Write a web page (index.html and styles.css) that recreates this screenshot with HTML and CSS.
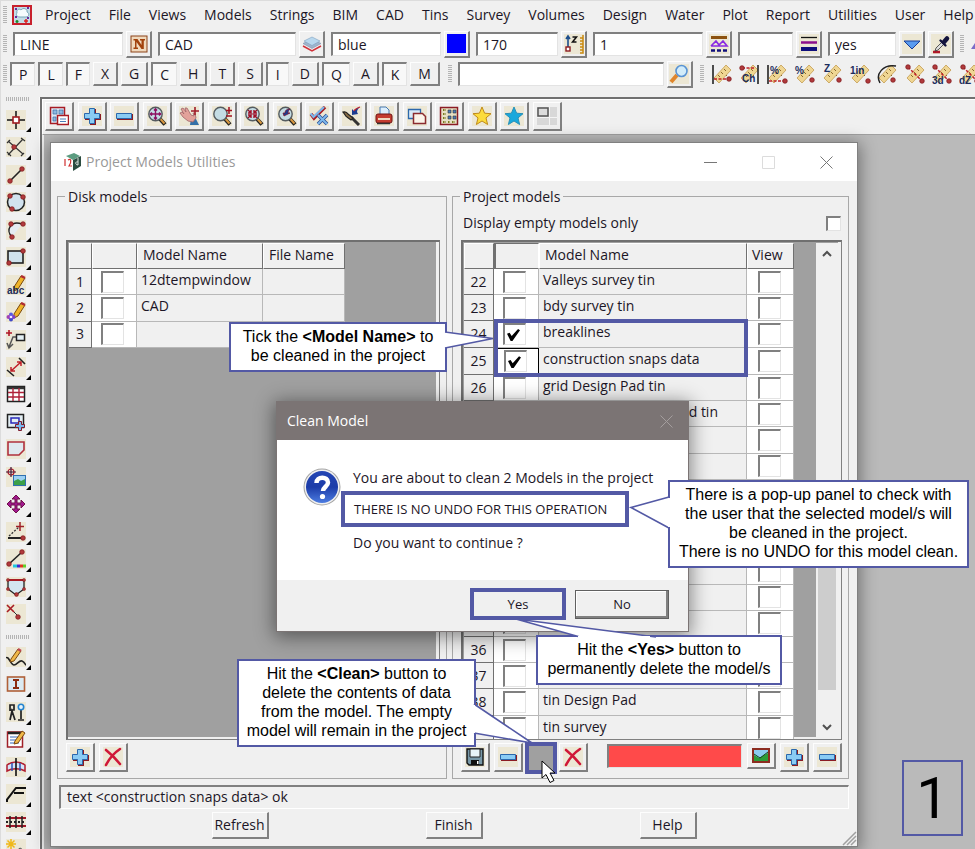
FILE: index.html
```
<!DOCTYPE html>
<html lang="en">
<head>
<meta charset="utf-8">
<title>Project Models Utilities</title>
<link rel="stylesheet" href="styles.css">
</head>
<body>

<svg class="defs" aria-hidden="true">
  <symbol id="bg" viewBox="0 0 20 20"><rect width="20" height="20" fill="#ece7d4"/></symbol>
  <symbol id="i-app" viewBox="0 0 20 20"><rect x="1" y="1" width="18" height="18" fill="#c3dce6" stroke="#c8202c" stroke-width="2"/><path d="M5 8c-1-3 2-5 4-3 2-3 7-1 6 2 3 1 2 5-1 5H8c-4 0-4-3-3-4z" fill="#f6fbfd" stroke="#7aa6b8"/><path d="M3 4h2M15 3h2M3 12h2M15 13h2" stroke="#6a2a9c" stroke-width="2"/><path d="M5 15v3M3.500 16.500h3" stroke="#1a8a2a" stroke-width="1.500"/><path d="M14 14v4M12 16h4" stroke="#e02020" stroke-width="1.500"/></symbol>
  <symbol id="i-n" viewBox="0 0 20 20"><rect x="2" y="2" width="16" height="16" fill="#f0d9bd" stroke="#8c4218"/><path d="M4.500 5h4l4 6V6.500H11V5h5v1.500h-1.200V15H12.500L7.500 8v5.500H9V15H4.500v-1.500H6v-7H4.500z" fill="#a2420c"/></symbol>
  <symbol id="i-layers" viewBox="0 0 20 20"><path d="M1 12l9 5 9-5" fill="none" stroke="#d03038" stroke-width="1.500"/><path d="M1 9.500l9-4.500 9 4.500-9 5z" fill="#9eb4cc" stroke="#7c92b0" stroke-width=".6"/><path d="M2 7l8-4 8 4-8 4.500z" fill="#b9d8ee" stroke="#7da0c0" stroke-width=".6"/></symbol>
  <symbol id="i-z" viewBox="0 0 20 20"><use href="#bg"/><path d="M4 2v12M2 5l2-3 2 3" fill="none" stroke="#1c4e8c" stroke-width="1.600"/><rect x="2" y="13" width="4" height="4" fill="#fff" stroke="#8c1c20" stroke-width="1.400"/><path d="M8.500 3h4l-4 5h4" fill="none" stroke="#111" stroke-width="1.500"/><path d="M19 1v18h-3M16 4h3M16 7h3M16 10h3M16 13h3M16 16h3" fill="none" stroke="#c98a10" stroke-width="1.500"/></symbol>
  <symbol id="i-tin" viewBox="0 0 20 20"><use href="#bg"/><path d="M2 3.500h16" stroke="#8c5210" stroke-width="3"/><path d="M2 12l5-5 3 4 4-4 4 5H2" fill="none" stroke="#8a2be2" stroke-width="1.700"/><path d="M2 16.500h16" stroke="#10107c" stroke-width="2.500" stroke-dasharray="4 2"/></symbol>
  <symbol id="i-weight" viewBox="0 0 20 20"><use href="#bg"/><path d="M2 3.500h16" stroke="#111" stroke-width="1.300"/><path d="M2 8.500h16" stroke="#8c108c" stroke-width="2.500"/><path d="M2 15h16" stroke="#10107c" stroke-width="4"/></symbol>
  <symbol id="i-down" viewBox="0 0 20 20"><use href="#bg"/><path d="M2 7h16l-8 8z" fill="#5a9cf0" stroke="#1a3e98"/></symbol>
  <symbol id="i-drop" viewBox="0 0 20 20"><use href="#bg"/><path d="M2 18h7" stroke="#b01828" stroke-width="2.500"/><path d="M4 17l1-3 6-6 2 2-6 6z" fill="#ddd" stroke="#333" stroke-width=".8"/><path d="M9.500 6.500l5 5" stroke="#14143c" stroke-width="2.400" stroke-linecap="round"/><path d="M13 8l3-3.500" stroke="#14143c" stroke-width="4.500" stroke-linecap="round"/></symbol>
  <symbol id="i-find" viewBox="0 0 20 20"><use href="#bg"/><path d="M2 18l6-7" stroke="#e0862c" stroke-width="4"/><circle cx="12.500" cy="7" r="5.500" fill="#d2ecfa" stroke="#5a94d4" stroke-width="1.600"/></symbol>
  <symbol id="ruler" viewBox="0 0 22 22"><path d="M3 15L15 2l5 5L8 20z" fill="#efd693" stroke="#c49c50" stroke-width=".8"/><path d="M7 12l2 2M10 9l2 2M13 6l2 2M15 12l1 1" stroke="#8c6a30"/></symbol>
  <symbol id="rdot" viewBox="0 0 6 6"><circle cx="3" cy="3" r="2.300" fill="#b03a3c" stroke="#7c1418" stroke-width=".7"/></symbol>
  <symbol id="m1" viewBox="0 0 22 22"><use href="#ruler"/><path d="M2 2v19" stroke="#222" stroke-width="1.600"/><path d="M3 16h14" stroke="#c02028" stroke-width="1.500" stroke-dasharray="3 1.500"/><use href="#rdot" x="15" y="13" width="6" height="6"/></symbol>
  <symbol id="m2" viewBox="0 0 22 22"><use href="#ruler"/><path d="M4 5h13" stroke="#c02028" stroke-width="1.500" stroke-dasharray="3 1.500"/><use href="#rdot" x="1" y="2" width="6" height="6"/><path d="M20 2v19" stroke="#222" stroke-width="1.600"/><text x="4" y="19" class="tt">Ch</text></symbol>
  <symbol id="m3" viewBox="0 0 22 22"><use href="#ruler"/><path d="M2 2v19" stroke="#222" stroke-width="1.600"/><path d="M3 18h14" stroke="#c02028" stroke-width="1.500" stroke-dasharray="3 1.500"/><use href="#rdot" x="16" y="15" width="6" height="6"/><text x="4" y="11" class="tt">%</text></symbol>
  <symbol id="m4" viewBox="0 0 22 22"><use href="#ruler"/><use href="#rdot" x="15" y="14" width="6" height="6"/><text x="1" y="11" class="tt">%</text></symbol>
  <symbol id="m5" viewBox="0 0 22 22"><use href="#ruler"/><use href="#rdot" x="15" y="14" width="6" height="6"/><text x="3" y="9" class="tt">Z</text></symbol>
  <symbol id="m6" viewBox="0 0 22 22"><use href="#ruler"/><use href="#rdot" x="16" y="15" width="6" height="6"/><text x="1" y="11" class="tt">1in</text></symbol>
  <symbol id="m7" viewBox="0 0 22 22"><use href="#ruler"/><path d="M4 20C-1 11 7 1 20 3" fill="none" stroke="#222" stroke-width="1.500"/><use href="#rdot" x="14" y="14" width="6" height="6"/></symbol>
  <symbol id="m8" viewBox="0 0 22 22"><use href="#ruler"/><path d="M4 4l14 14" stroke="#c02028" stroke-width="1.500" stroke-dasharray="3 1.500"/><use href="#rdot" x="1" y="1" width="6" height="6"/><use href="#rdot" x="15" y="15" width="6" height="6"/></symbol>
  <symbol id="m9" viewBox="0 0 22 22"><use href="#m8"/><text x="1" y="21" class="tt">3d</text></symbol>
  <symbol id="m10" viewBox="0 0 22 22"><use href="#m8"/><text x="0" y="21" class="tt">dZ</text></symbol>

  <symbol id="t-views" viewBox="0 0 20 20"><rect x="1.500" y="1.500" width="14" height="16" fill="#dbe9f6" stroke="#a81c24" stroke-width="1.500"/><path d="M4 4h4v4H4zM10 4h4v4h-4zM4 11h3v4H4z" fill="#8cb8e0" stroke="#3c6ca0" stroke-width=".7"/><rect x="8.500" y="9.500" width="11" height="9" fill="#fff" stroke="#a81c24" stroke-width="1.500"/><path d="M11 13h6M11 15.500h6" stroke="#4a7cb8"/></symbol>
  <symbol id="t-plus" viewBox="0 0 20 20"><use href="#bg"/><path d="M8 3h6v5h5v6h-5v5H8v-5H3V8h5z" fill="#8c1c24"/><path d="M7.500 2.500h5v5h5v5h-5v5h-5v-5h-5v-5h5z" fill="#8accf4" stroke="#2c68ac"/></symbol>
  <symbol id="t-minus" viewBox="0 0 20 20"><use href="#bg"/><path d="M3 8h16v6H3z" fill="#8c1c24"/><path d="M2.500 7.500h15v5h-15z" fill="#8accf4" stroke="#2c68ac"/></symbol>
  <symbol id="mag" viewBox="0 0 20 20"><use href="#bg"/><path d="M12.500 12.500l5.500 6" stroke="#222" stroke-width="4"/><path d="M13.500 13l4 4.500" stroke="#d89840" stroke-width="2"/><circle cx="8.500" cy="8" r="6.700" fill="#c4dce4" stroke="#555c60" stroke-width="1.400"/></symbol>
  <symbol id="t-zoomall" viewBox="0 0 20 20"><use href="#mag"/><path d="M8.500 3v10M3.500 8h10M7 4.500l1.500-1.700L10 4.500M7 11.500l1.500 1.700 1.500-1.700M5 6.500L3.300 8 5 9.500M12 6.500L13.700 8 12 9.500" fill="none" stroke="#8c1060" stroke-width="1.400"/></symbol>
  <symbol id="t-pan" viewBox="0 0 20 20"><use href="#bg"/><path d="M12 12l5 1 3 6h-9z" fill="#3470a8"/><path d="M1 7l2-1 2 2-3-5 2-1 3 4-1-4 2 0 4 7 3 1-1-3 2 0 1 5-3 4-5-1-5-4z" fill="#e2a29a" stroke="#a06468" stroke-width=".8"/><path d="M16 1v8M12 5h8" stroke="#a01c28" stroke-width="1.600"/></symbol>
  <symbol id="t-zoompm" viewBox="0 0 20 20"><use href="#mag"/><path d="M17 1v7M14 4.500h6M14 10h6" stroke="#a01020" stroke-width="1.500"/></symbol>
  <symbol id="t-zoomin" viewBox="0 0 20 20"><use href="#mag"/><path d="M4 4l3 3H4M7 7V4M13 4l-3 3h3M10 7V4M4 12l3-3H4M7 9v3M13 12l-3-3h3M10 9v3" fill="none" stroke="#a01028" stroke-width="1.400"/></symbol>
  <symbol id="t-zoomprev" viewBox="0 0 20 20"><use href="#mag"/><path d="M7 10l-1-3h2c0-3 2-4 5-4-1 1-2 2-2 4h2z" fill="#1c3c90" stroke="#801028" stroke-width=".7"/></symbol>
  <symbol id="t-sel" viewBox="0 0 20 20"><use href="#bg"/><path d="M2 8l3 4L16 1" fill="none" stroke="#a81c24" stroke-width="3.500"/><path d="M1.500 7.500l3 3.500L15 1" fill="none" stroke="#7cb8ec" stroke-width="2.200"/><path d="M9 9l9 9M18 9l-9 9" stroke="#2c4c94" stroke-width="3.500"/><path d="M9 9l9 9M18 9l-9 9" stroke="#7cb8ec" stroke-width="2"/></symbol>
  <symbol id="t-brush" viewBox="0 0 20 20"><use href="#bg"/><path d="M9 11l8 8" stroke="#333" stroke-width="3"/><path d="M1 6c3-1 4 1 5 2l5 4-2 2-4-3C3 10 3 8 1 6z" fill="#8c7048" stroke="#222" stroke-width="1.200"/><path d="M10 9l0-6 2 2c1-2 3-3 6-4-2 2-3 3-3 5l1 2z" fill="#1c3c90"/><path d="M12 5c1-2 3-3 6-4" fill="none" stroke="#c02030" stroke-width="1.300"/></symbol>
  <symbol id="t-print" viewBox="0 0 20 20"><use href="#bg"/><path d="M6 8V1h6l3 3v4" fill="#dceefc" stroke="#4878b0"/><rect x="2" y="8" width="16" height="9" rx="2" fill="#c43c30" stroke="#701414"/><path d="M4 13h12" stroke="#f0d8c0" stroke-width="2"/><path d="M3 17.500h13" stroke="#333" stroke-width="1.500"/></symbol>
  <symbol id="t-copy" viewBox="0 0 20 20"><use href="#bg"/><path d="M1.500 3.500h12v9h-12z" fill="#d8eaf8" stroke="#2c68ac" stroke-width="1.300"/><path d="M6.500 7.500h9l3 3v7h-12z" fill="#fbf4ea" stroke="#8c2c30" stroke-width="1.500"/></symbol>
  <symbol id="t-grid" viewBox="0 0 20 20"><rect x="1.500" y="1.500" width="17" height="17" fill="#e6e0c4" stroke="#8c1c24" stroke-width="1.500"/><path d="M4 4h3M4 8h3M4 12h3M4 16h3M9 16h2M13 16h3" stroke="#7c7c20" stroke-width="2" stroke-dasharray="1.500 1"/><path d="M9 4h3v3H9zM14 4h3v3h-3zM9 10h3v3H9zM14 10h3v3h-3z" fill="#4c7cb8" stroke="#333" stroke-width=".6"/></symbol>
  <symbol id="t-stary" viewBox="0 0 20 20"><use href="#bg"/><path d="M10 1l2.600 6.200 6.400.5-5 4.200 1.600 6.600L10 15l-5.600 3.500L6 11.900 1 7.700l6.400-.5z" fill="#fcdc3c" stroke="#c08a18"/></symbol>
  <symbol id="t-starb" viewBox="0 0 20 20"><use href="#bg"/><path d="M10 1l2.600 6.200 6.400.5-5 4.200 1.600 6.600L10 15l-5.600 3.500L6 11.900 1 7.700l6.400-.5z" fill="#18a8dc" stroke="#2890b8"/></symbol>
  <symbol id="t-layout" viewBox="0 0 20 20"><rect y="1" width="20" height="18" fill="#d8d8d8"/><path d="M0 11.500h20M12.500 1v18" stroke="#f4f4f4"/><rect x="1" y="2" width="10" height="8" fill="#dcdcdc" stroke="#555" stroke-width="1.500"/></symbol>

  <symbol id="s1" viewBox="0 0 20 20"><use href="#bg"/><path d="M10 1v18M1 10h18" stroke="#111" stroke-width="1.500"/><rect x="7" y="7" width="6" height="6" fill="#fff" stroke="#a01c20" stroke-width="1.600"/></symbol>
  <symbol id="s2" viewBox="0 0 20 20"><use href="#bg"/><path d="M2 4l15 13M17 2L2 18M1 6l3-3M15 19l3-3M15 1l4 3M1 15l4 4" stroke="#333" stroke-width="1.200"/><use href="#rdot" x="5" y="7" width="6" height="6"/></symbol>
  <symbol id="s3" viewBox="0 0 20 20"><use href="#bg"/><path d="M4 16L16 4" stroke="#222" stroke-width="1.600"/><use href="#rdot" x="1" y="13" width="6" height="6"/><use href="#rdot" x="13" y="1" width="6" height="6"/></symbol>
  <symbol id="s4" viewBox="0 0 20 20"><use href="#bg"/><circle cx="10" cy="10" r="8.500" fill="#d2e2ee" stroke="#222" stroke-width="1.500"/><use href="#rdot" x="1" y="1" width="6" height="6"/><use href="#rdot" x="14" y="2" width="6" height="6"/><use href="#rdot" x="3" y="14" width="6" height="6"/></symbol>
  <symbol id="s5" viewBox="0 0 20 20"><use href="#bg"/><path d="M6 17C-1 10 5 0 16 4z" fill="#e4ecf2"/><path d="M6 17C-1 10 5 0 16 4" fill="none" stroke="#222" stroke-width="1.500"/><use href="#rdot" x="2" y="1" width="6" height="6"/><use href="#rdot" x="14" y="1" width="6" height="6"/><use href="#rdot" x="3" y="14" width="6" height="6"/></symbol>
  <symbol id="s6" viewBox="0 0 20 20"><use href="#bg"/><rect x="2" y="4" width="15" height="12" fill="#cfe2ec" stroke="#222" stroke-width="1.600"/><use href="#rdot" x="14" y="1" width="6" height="6"/><use href="#rdot" x="0" y="13" width="6" height="6"/></symbol>
  <symbol id="pen" viewBox="0 0 20 20"><path d="M8 12l7-11 4 2-7 11-4 2z" fill="#f0b428" stroke="#7a4a10"/><path d="M15 1l4 2" stroke="#b02c34" stroke-width="2.500"/></symbol>
  <symbol id="s7" viewBox="0 0 20 20"><use href="#bg"/><use href="#pen"/><text x="1" y="19" class="tt">abc</text></symbol>
  <symbol id="s8" viewBox="0 0 20 20"><use href="#bg"/><use href="#pen"/><circle cx="5" cy="12.500" r="2" fill="#5858e0"/><circle cx="2.500" cy="15" r="2" fill="#a040b8"/><circle cx="7.500" cy="15" r="2" fill="#7c40c8"/><circle cx="5" cy="17.500" r="2" fill="#4048c8"/><circle cx="5" cy="15" r="1.300" fill="#f4e8ff"/></symbol>
  <symbol id="s9" viewBox="0 0 20 20"><use href="#bg"/><path d="M3 0v6M0 3h6" stroke="#b01828" stroke-width="1.600"/><path d="M10 7H7L3 17M1 13l2 5 4-4" fill="none" stroke="#555" stroke-width="1.500"/><rect x="10.500" y="4.500" width="8" height="6" fill="#e4f0f4" stroke="#222" stroke-width="1.500"/></symbol>
  <symbol id="s10" viewBox="0 0 20 20"><use href="#bg"/><path d="M1 13l7 6M13 1l6 6" stroke="#222" stroke-width="1.600"/><path d="M5 14L15 5M5 10v4h4M11 5h4v4" fill="none" stroke="#c02028" stroke-width="1.500"/></symbol>
  <symbol id="s11" viewBox="0 0 20 20"><rect x="1.500" y="2.500" width="17" height="15" fill="#fff" stroke="#222" stroke-width="1.500"/><path d="M2 4h16" stroke="#333" stroke-width="2.500"/><path d="M2 8.500h16M2 13h16M7 4v13M13 4v13" stroke="#b02038" stroke-width="1.400"/></symbol>
  <symbol id="s12" viewBox="0 0 20 20"><rect x="1.500" y="2.500" width="16" height="13" fill="#e2edf2" stroke="#222" stroke-width="1.500"/><rect x="5" y="6" width="8" height="5" fill="none" stroke="#2828b8" stroke-width="1.500"/><path d="M12.500 9.500h3v3h3v3h-3v3h-3v-3h-3v-3h3z" fill="#78b8f0" stroke="#801c2c"/></symbol>
  <symbol id="s13" viewBox="0 0 20 20"><use href="#bg"/><path d="M2 3h16v8l-5 5H2z" fill="#dfe8ee" stroke="#b0303c" stroke-width="1.600"/></symbol>
  <symbol id="s14" viewBox="0 0 20 20"><use href="#bg"/><circle cx="5" cy="5" r="3" fill="none" stroke="#b01828" stroke-width="1.200"/><path d="M5 0v10M0 5h10" stroke="#401838" stroke-width="1.200"/><rect x="7.500" y="8.500" width="12" height="10" fill="#9cd0f4" stroke="#3070b0"/><path d="M8 18v-4l4-2 3 2 4-2v6z" fill="#3ca048"/></symbol>
  <symbol id="s15" viewBox="0 0 20 20"><path d="M10 1l4 4h-3v4h4V6l4 4-4 4v-3h-4v4h3l-4 4-4-4h3v-4H5v3l-4-4 4-4v3h4V5H6z" fill="#a01890" stroke="#701048"/></symbol>
  <symbol id="s16" viewBox="0 0 20 20"><use href="#bg"/><path d="M2 16h15" stroke="#222" stroke-width="2"/><path d="M3 14L13 5" stroke="#333" stroke-dasharray="2 1.500" stroke-width="1.300"/><path d="M14 0v9M10 4.500h8" stroke="#a02028" stroke-width="1.500"/><use href="#rdot" x="14" y="13" width="6" height="6"/></symbol>
  <symbol id="s17" viewBox="0 0 20 20"><use href="#bg"/><path d="M3 15L16 3" stroke="#222" stroke-width="1.600"/><use href="#rdot" x="0" y="12" width="6" height="6"/><use href="#rdot" x="13" y="0" width="6" height="6"/><path d="M7 17h4" stroke="#20c8e0" stroke-width="3"/><path d="M11 17h3" stroke="#4028d0" stroke-width="3"/><path d="M14 17h3" stroke="#e03820" stroke-width="3"/><path d="M17 17h3" stroke="#60d028" stroke-width="3"/></symbol>
  <symbol id="s18" viewBox="0 0 20 20"><use href="#bg"/><path d="M2 3h16v9l-8 6-8-6z" fill="#d4e6f0" stroke="#222" stroke-width="1.300"/><path d="M2 3h16" stroke="#a81c24" stroke-width="2"/><use href="#rdot" x="0" y="1" width="4" height="4"/><use href="#rdot" x="16" y="1" width="4" height="4"/><use href="#rdot" x="8" y="15" width="5" height="5"/><use href="#rdot" x="0" y="10" width="4" height="4"/><use href="#rdot" x="16" y="10" width="4" height="4"/></symbol>
  <symbol id="s19" viewBox="0 0 20 20"><use href="#bg"/><path d="M1 1l7 7M8 1L1 8" stroke="#a81c24" stroke-width="1.600"/><path d="M8 8l3 3" stroke="#333"/><use href="#rdot" x="9" y="10" width="6" height="6"/></symbol>
  <symbol id="s20" viewBox="0 0 20 20"><use href="#bg"/><path d="M0 11c2-3 5 7 8 7s5-5 8-4 3 4 4 4" fill="none" stroke="#222" stroke-width="1.600"/><path d="M5 12L12 2l3 2-7 10-4 1z" fill="#f0b848" stroke="#7a4a10"/><path d="M12 2l3 2" stroke="#c04850" stroke-width="2.500"/></symbol>
  <symbol id="s21" viewBox="0 0 20 20"><rect x="1.500" y="3" width="17" height="14" fill="#dbeaf2" stroke="#b06038" stroke-width="1.600"/><path d="M7 6h6M7 14h6M10 6v8" stroke="#8c2c10" stroke-width="2"/></symbol>
  <symbol id="s22" viewBox="0 0 20 20"><use href="#bg"/><path d="M4 18l2-9 3 9M4 9V3h4v5H4M15 8v9M12 18h6" fill="none" stroke="#222" stroke-width="1.700"/><circle cx="15" cy="5" r="2.700" fill="#e8f4fc" stroke="#2484d0" stroke-width="1.600"/></symbol>
  <symbol id="s23" viewBox="0 0 20 20"><rect x="1.500" y="3" width="15" height="15" fill="#fff" stroke="#a02028" stroke-width="1.500"/><path d="M2 4h14" stroke="#222" stroke-width="2.500"/><path d="M4 8h9M4 11h7M4 14h9" stroke="#3868b8" stroke-width="1.200"/><path d="M9 12l7-10 3 2-7 10-4 1z" fill="#f0b848" stroke="#7a4a10"/></symbol>
  <symbol id="s24" viewBox="0 0 20 20"><use href="#bg"/><path d="M1 8c5-4 13-4 18 0v6c-5-3-13-3-18 0z" fill="#d4e4f8" stroke="#b01c30" stroke-width="1.500"/><path d="M6 6v8M14 6v8" stroke="#3050b0" stroke-width="1.500"/><path d="M10 1v18" stroke="#111" stroke-width="1.600"/></symbol>
  <symbol id="s25" viewBox="0 0 20 20"><use href="#bg"/><path d="M0 17L10 4h10M8 9h10M0 17h2" fill="none" stroke="#111" stroke-width="2"/></symbol>
  <symbol id="s26" viewBox="0 0 20 20"><use href="#bg"/><path d="M0 6h20M0 14h20" stroke="#a01828" stroke-width="1.800"/><path d="M0 10h20" stroke="#222" stroke-width="2" stroke-dasharray="2 2"/><path d="M4 4v12M10 4v12M16 4v12" stroke="#222" stroke-width="1.500"/></symbol>
  <symbol id="s27" viewBox="0 0 20 20"><use href="#bg"/><path d="M5 0v10M0 5h10M1.500 1.500l7 7M8.500 1.500l-7 7" stroke="#f0b818" stroke-width="1.500"/><path d="M8 14l6-5 5 3v8H8z" fill="#c4ccd0" stroke="#555"/></symbol>

  <symbol id="b-x" viewBox="0 0 20 20"><use href="#bg"/><path d="M3 3c5 4 10 9 14 14M17 2C11 6 6 12 3 18" fill="none" stroke="#d01838" stroke-width="2.600" stroke-linecap="round"/></symbol>
  <symbol id="b-save" viewBox="0 0 20 20"><use href="#bg"/><path d="M2 2h16v16H4l-2-2z" fill="#7898a8" stroke="#111" stroke-width="1.400"/><path d="M5 2h10v8H5z" fill="#e8f4f8" stroke="#222"/><path d="M6 13h8v5H6z" fill="#111"/><path d="M12 14h1.500v3H12z" fill="#fff"/></symbol>
  <symbol id="b-pic" viewBox="0 0 20 20"><rect x="2" y="3" width="16" height="13" fill="#8cccf0" stroke="#8c2c20" stroke-width="2"/><path d="M3 15V9l5 3 9-5v8z" fill="#2c9c38"/><path d="M3 8l6 4 8-6" fill="none" stroke="#14401c"/></symbol>
  <symbol id="b-12d" viewBox="0 0 20 20"><path d="M3 4l8-3 6 3-7 4z" fill="#5c9c80"/><path d="M10 8l8-4v10l-8 5z" fill="#2c4c40"/><path d="M15 6v7M15 10c-3-1-3 3 0 3" fill="none" stroke="#dfe8e4" stroke-width="1"/><path d="M2 7v7M5 8c3-2 4 1 1 6h3" fill="none" stroke="#d03030" stroke-width="1.200"/></symbol>
</svg>

<header>
  <nav class="menubar" aria-label="Main menu">
    <span class="grip"></span>
    <svg class="ic"><use href="#i-app"/></svg>
    <a href="#">Project</a><a href="#">File</a><a href="#">Views</a><a href="#">Models</a><a href="#">Strings</a><a href="#">BIM</a><a href="#">CAD</a><a href="#">Tins</a><a href="#">Survey</a><a href="#">Volumes</a><a href="#">Design</a><a href="#">Water</a><a href="#">Plot</a><a href="#">Report</a><a href="#">Utilities</a><a href="#">User</a><a href="#">Help</a>
  </nav>

  <div class="bar props">
    <span class="grip"></span>
    <span class="pair"><input class="field w-m" value="LINE" aria-label="Name"><button class="btn" aria-label="Pick name"><svg class="ic"><use href="#i-n"/></svg></button></span>
    <span class="pair"><input class="field w-l" value="CAD" aria-label="Model"><button class="btn" aria-label="Pick model"><svg class="ic"><use href="#i-layers"/></svg></button></span>
    <span class="pair"><input class="field w-m" value="blue" aria-label="Colour"><button class="btn" aria-label="Pick colour"><span class="swatch"></span></button></span>
    <span class="pair"><input class="field w-s" value="170" aria-label="Height"><button class="btn" aria-label="Pick height"><svg class="ic"><use href="#i-z"/></svg></button></span>
    <span class="pair"><input class="field w-m" value="1" aria-label="Line style"><button class="btn" aria-label="Pick line style"><svg class="ic"><use href="#i-tin"/></svg></button></span>
    <span class="pair"><input class="field w-xs" value="" aria-label="Weight"><button class="btn" aria-label="Pick weight"><svg class="ic"><use href="#i-weight"/></svg></button></span>
    <span class="pair"><input class="field w-y" value="yes" aria-label="Tinable"><button class="btn" aria-label="Choose"><svg class="ic"><use href="#i-down"/></svg></button><button class="btn" aria-label="Sample"><svg class="ic"><use href="#i-drop"/></svg></button></span>
    <span class="grip"></span>
    <svg class="ic"><path d="M1 15l6-9 6 9z" fill="#7a6cc8"/></svg>
  </div>

  <div class="bar snaps">
    <span class="grip"></span>
    <div class="toggles">
      <button class="tog on">P</button><button class="tog on">L</button><button class="tog on">F</button><button class="tog">X</button><button class="tog">G</button><button class="tog on">C</button><button class="tog">H</button><button class="tog">T</button><button class="tog">S</button><button class="tog on">I</button><button class="tog">D</button><button class="tog on">Q</button><button class="tog">A</button><button class="tog on">K</button><button class="tog">M</button>
    </div>
    <span class="grip"></span>
    <span class="pair"><input class="field w-find" value="" aria-label="Find"><button class="btn" aria-label="Search"><svg class="ic"><use href="#i-find"/></svg></button></span>
    <span class="grip"></span>
    <div class="measure">
      <svg><use href="#m1"/></svg><svg><use href="#m2"/></svg><svg><use href="#m3"/></svg><svg><use href="#m4"/></svg><svg><use href="#m5"/></svg><svg><use href="#m6"/></svg><svg><use href="#m7"/></svg><svg><use href="#m8"/></svg><svg><use href="#m9"/></svg><svg><use href="#m10"/></svg>
    </div>
  </div>
</header>

<div class="work">
  <aside class="side">
    <span class="hgrip"></span>
    <div class="tools tools-a">
      <span><svg><use href="#s1"/></svg></span><span><svg><use href="#s2"/></svg></span><span><svg><use href="#s3"/></svg></span><span><svg><use href="#s4"/></svg></span><span><svg><use href="#s5"/></svg></span><span><svg><use href="#s6"/></svg></span><span><svg><use href="#s7"/></svg></span><span><svg><use href="#s8"/></svg></span><span><svg><use href="#s9"/></svg></span><span><svg><use href="#s10"/></svg></span><span><svg><use href="#s11"/></svg></span><span><svg><use href="#s12"/></svg></span><span><svg><use href="#s13"/></svg></span><span><svg><use href="#s14"/></svg></span><span><svg><use href="#s15"/></svg></span><span><svg><use href="#s16"/></svg></span><span><svg><use href="#s17"/></svg></span><span><svg><use href="#s18"/></svg></span><span><svg><use href="#s19"/></svg></span>
    </div>
    <span class="hgrip"></span>
    <div class="tools tools-b">
      <span><svg><use href="#s20"/></svg></span><span><svg><use href="#s21"/></svg></span><span><svg><use href="#s22"/></svg></span><span><svg><use href="#s23"/></svg></span><span><svg><use href="#s24"/></svg></span><span><svg><use href="#s25"/></svg></span><span><svg><use href="#s26"/></svg></span><span><svg><use href="#s27"/></svg></span>
    </div>
  </aside>

  <main class="plan">
    <div class="planbar">
      <button class="btn sq" aria-label="Views"><svg class="ic"><use href="#t-views"/></svg></button><button class="btn sq" aria-label="Add"><svg class="ic"><use href="#t-plus"/></svg></button><button class="btn sq" aria-label="Remove"><svg class="ic"><use href="#t-minus"/></svg></button><button class="btn sq" aria-label="Fit"><svg class="ic"><use href="#t-zoomall"/></svg></button><button class="btn sq" aria-label="Pan"><svg class="ic"><use href="#t-pan"/></svg></button><button class="btn sq" aria-label="Zoom"><svg class="ic"><use href="#t-zoompm"/></svg></button><button class="btn sq" aria-label="Shrink"><svg class="ic"><use href="#t-zoomin"/></svg></button><button class="btn sq" aria-label="Previous"><svg class="ic"><use href="#t-zoomprev"/></svg></button><button class="btn sq" aria-label="Toggle"><svg class="ic"><use href="#t-sel"/></svg></button><button class="btn sq" aria-label="Redraw"><svg class="ic"><use href="#t-brush"/></svg></button><button class="btn sq" aria-label="Plot"><svg class="ic"><use href="#t-print"/></svg></button><button class="btn sq" aria-label="Copy"><svg class="ic"><use href="#t-copy"/></svg></button><button class="btn sq" aria-label="Grid"><svg class="ic"><use href="#t-grid"/></svg></button><button class="btn sq" aria-label="Favourite"><svg class="ic"><use href="#t-stary"/></svg></button><button class="btn sq" aria-label="Marked"><svg class="ic"><use href="#t-starb"/></svg></button><button class="btn sq" aria-label="Layout"><svg class="ic"><use href="#t-layout"/></svg></button>
    </div>
    <div class="desk">
      <section class="dialog">
        <div class="title">
          <svg class="ic"><use href="#b-12d"/></svg>
          <h1>Project Models Utilities</h1>
          <svg class="wc"><path d="M0 6.500h13" stroke="#777"/></svg>
          <svg class="wc"><path d="M.5.500h12v12H.500z" fill="none" stroke="#dcdcdc"/></svg>
          <svg class="wc"><path d="M.5.500l12 12M12.500.500l-12 12" stroke="#777"/></svg>
        </div>
        <div class="panels">
          <fieldset class="disk">
            <legend>Disk models</legend>
            <div class="line"></div>
            <div class="frame">
              <table class="grid-l">
                <thead><tr><th class="n"></th><th class="c"></th><th class="name">Model Name</th><th class="file">File Name</th></tr></thead>
                <tbody>
                  <tr><th class="n">1</th><td class="c"><input type="checkbox" aria-label="Row 1"></td><td>12dtempwindow</td><td></td></tr>
                  <tr><th class="n">2</th><td class="c"><input type="checkbox" aria-label="Row 2"></td><td>CAD</td><td></td></tr>
                  <tr><th class="n">3</th><td class="c"><input type="checkbox" aria-label="Row 3"></td><td></td><td></td></tr>
                </tbody>
              </table>
            </div>
            <div class="acts">
              <button class="btn sq" aria-label="Add"><svg class="ic"><use href="#t-plus"/></svg></button>
              <button class="btn sq" aria-label="Delete"><svg class="ic"><use href="#b-x"/></svg></button>
            </div>
          </fieldset>
          <fieldset class="proj">
            <legend>Project models</legend>
            <div class="line"><label for="empty">Display empty models only</label><input type="checkbox" id="empty" class="small"></div>
            <div class="frame">
              <table class="grid-r">
                <thead><tr><th class="n"></th><th class="c down"></th><th class="name">Model Name</th><th class="view">View</th></tr></thead>
                <tbody>
                  <tr><th class="n">22</th><td class="c"><input type="checkbox" aria-label="Row 22"></td><td>Valleys survey tin</td><td class="v"><input type="checkbox" aria-label="View 22"></td></tr>
                  <tr><th class="n">23</th><td class="c"><input type="checkbox" aria-label="Row 23"></td><td>bdy survey tin</td><td class="v"><input type="checkbox" aria-label="View 23"></td></tr>
                  <tr><th class="n">24</th><td class="c"><input type="checkbox" aria-label="Row 24" checked></td><td>breaklines</td><td class="v"><input type="checkbox" aria-label="View 24"></td></tr>
                  <tr><th class="n">25</th><td class="c cur"><input type="checkbox" aria-label="Row 25" checked></td><td>construction snaps data</td><td class="v"><input type="checkbox" aria-label="View 25"></td></tr>
                  <tr><th class="n">26</th><td class="c"><input type="checkbox" aria-label="Row 26"></td><td>grid Design Pad tin</td><td class="v"><input type="checkbox" aria-label="View 26"></td></tr>
                  <tr><th class="n"></th><td class="c"><input type="checkbox" aria-label="Row 27"></td><td class="tail">nd tin</td><td class="v"><input type="checkbox" aria-label="View 27"></td></tr>
                  <tr><th class="n"></th><td class="c"><input type="checkbox" aria-label="Row 28"></td><td></td><td class="v"><input type="checkbox" aria-label="View 28"></td></tr>
                  <tr><th class="n"></th><td class="c"><input type="checkbox" aria-label="Row 29"></td><td></td><td class="v"><input type="checkbox" aria-label="View 29"></td></tr>
                  <tr><th class="n"></th><td class="c"><input type="checkbox" aria-label="Row 30"></td><td></td><td class="v"><input type="checkbox" aria-label="View 30"></td></tr>
                  <tr><th class="n"></th><td class="c"><input type="checkbox" aria-label="Row 31"></td><td></td><td class="v"><input type="checkbox" aria-label="View 31"></td></tr>
                  <tr><th class="n"></th><td class="c"><input type="checkbox" aria-label="Row 32"></td><td></td><td class="v"><input type="checkbox" aria-label="View 32"></td></tr>
                  <tr><th class="n"></th><td class="c"><input type="checkbox" aria-label="Row 33"></td><td></td><td class="v"><input type="checkbox" aria-label="View 33"></td></tr>
                  <tr><th class="n"></th><td class="c"><input type="checkbox" aria-label="Row 34"></td><td></td><td class="v"><input type="checkbox" aria-label="View 34"></td></tr>
                  <tr><th class="n"></th><td class="c"><input type="checkbox" aria-label="Row 35"></td><td></td><td class="v"><input type="checkbox" aria-label="View 35"></td></tr>
                  <tr><th class="n">36</th><td class="c"><input type="checkbox" aria-label="Row 36"></td><td></td><td class="v"><input type="checkbox" aria-label="View 36"></td></tr>
                  <tr><th class="n">37</th><td class="c"><input type="checkbox" aria-label="Row 37"></td><td></td><td class="v"><input type="checkbox" aria-label="View 37"></td></tr>
                  <tr><th class="n">38</th><td class="c"><input type="checkbox" aria-label="Row 38"></td><td>tin Design Pad</td><td class="v"><input type="checkbox" aria-label="View 38"></td></tr>
                  <tr><th class="n"></th><td class="c"><input type="checkbox" aria-label="Row 39"></td><td>tin survey</td><td class="v"><input type="checkbox" aria-label="View 39"></td></tr>
                </tbody>
              </table>
              <div class="scroll">
                <svg viewBox="0 0 12 12"><path d="M2 8l4-4 4 4" fill="none" stroke="#505050" stroke-width="2"/></svg>
                <span class="thumb"></span>
                <svg viewBox="0 0 12 12"><path d="M2 4l4 4 4-4" fill="none" stroke="#505050" stroke-width="2"/></svg>
              </div>
            </div>
            <div class="acts">
              <button class="btn sq" aria-label="Save"><svg class="ic"><use href="#b-save"/></svg></button>
              <button class="btn sq" aria-label="Unmark"><svg class="ic"><use href="#t-minus"/></svg></button>
              <button class="btn sq clean" aria-label="Clean"></button>
              <button class="btn sq" aria-label="Delete"><svg class="ic"><use href="#b-x"/></svg></button>
              <input class="field red" aria-label="View name">
              <button class="btn sq pic" aria-label="View"><svg class="ic"><use href="#b-pic"/></svg></button>
              <button class="btn sq" aria-label="Add"><svg class="ic"><use href="#t-plus"/></svg></button>
              <button class="btn sq" aria-label="Remove"><svg class="ic"><use href="#t-minus"/></svg></button>
            </div>
          </fieldset>
        </div>
        <div class="status">text &lt;construction snaps data&gt; ok</div>
        <div class="foot"><button class="btn wide">Refresh</button><button class="btn wide">Finish</button><button class="btn wide">Help</button></div>
        <svg class="resize"><path d="M1 14L14 1M5 14l9-9M9 14l5-5" stroke="#a0a0a0" stroke-width="1.500"/></svg>
      </section>
    </div>
  </main>
</div>

<div class="over rows-mark"></div>

<section class="over modal">
  <div class="mtitle"><h2>Clean Model</h2><svg class="wc"><path d="M.5.500l12 12M12.500.500l-12 12" stroke="#a49e9e"/></svg></div>
  <div class="mbody">
    <svg class="q" viewBox="0 0 38 38"><defs><linearGradient id="qg" x1="0" y1="0" x2="0" y2="1"><stop offset="0" stop-color="#2446b4"/><stop offset=".5" stop-color="#1c3ca8"/><stop offset="1" stop-color="#4c7ce0"/></linearGradient></defs><circle cx="19" cy="19" r="18.500" fill="#a4a4a4"/><circle cx="19" cy="19" r="17.500" fill="#f0f0f0"/><circle cx="19" cy="19" r="16" fill="url(#qg)"/><path d="M13.500 15c0-7 11.500-7 11.500-.5 0 4-5 4.500-5 8.500" fill="none" stroke="#fff" stroke-width="4.500"/><circle cx="19.500" cy="28.500" r="2.600" fill="#fff"/></svg>
    <div class="msg"><p>You are about to clean 2 Models in the project</p><p class="warn">THERE IS NO UNDO FOR THIS OPERATION</p><p>Do you want to continue ?</p></div>
  </div>
  <div class="mfoot"><button class="yes">Yes</button><button class="no">No</button></div>
</section>

<div class="over note n1">Tick the <b>&lt;Model Name&gt;</b> to<br>be cleaned in the project</div>
<div class="over note n2">There is a pop-up panel to check with<br>the user that the selected model/s will<br>be cleaned in the project.<br>There is no UNDO for this model clean.</div>
<div class="over note n3">Hit the <b>&lt;Yes&gt;</b> button to<br>permanently delete the model/s</div>
<div class="over note n4">Hit the <b>&lt;Clean&gt;</b> button to<br>delete the contents of data<br>from the model. The empty<br>model will remain in the project</div>

<svg class="over tails" viewBox="0 0 975 849">
  <g fill="#fff" stroke="#5359a5" stroke-width="1.600">
    <path d="M445 332L493 338.500L445 348"/>
    <path d="M669 497L631 507.500L669 528"/>
    <path d="M580 637L516 619L656 637"/>
    <path d="M474 704L532 743L474 733"/>
  </g>
  <g fill="#fff">
    <path d="M443 333h3v14h-3zM668 498h4v29h-4zM578 636h72v3h-72zM472 705h3v28h-3z"/>
  </g>
  <path d="M542 761v17l4-3.500 4 8 4-2-4-7.500h5z" fill="#fff" stroke="#000"/>
</svg>

<div class="over step">1</div>
</body>
</html>
```
FILE: styles.css
```
* { box-sizing: border-box; }

body {
  margin: 0;
  position: relative;
  min-height: 100vh;
  height: 100vh;
  overflow: hidden;
  display: flex;
  flex-direction: column;
  background: #f0f0f0;
  border-top: 1px solid #dcdcdc;
  border-left: 1px solid #dcdcdc;
  font: 14px/20px "Open Sans", "Noto Sans", sans-serif;
  color: #1c1626;
}

button, input { font: inherit; color: inherit; margin: 0; padding: 0; border-radius: 0; }
.defs { display: none; }
.tt { font: bold 10px "Liberation Sans", sans-serif; fill: #1c2c5c; }
.ic { width: 20px; height: 20px; flex: none; display: block; }

.grip {
  width: 4px;
  height: 18px;
  flex: none;
  background: repeating-linear-gradient(#b4b4b4 0 1px, #f0f0f0 1px 2px);
}

.menubar { display: flex; align-items: center; height: 28px; padding-left: 2px; }
.menubar .ic { margin: 0 13px 0 5px; }
.menubar a { color: inherit; text-decoration: none; margin-right: 18px; flex: none; }

.bar { display: flex; align-items: center; height: 30px; padding-left: 2px; }
.props { gap: 6px; }
.pair { display: flex; align-items: center; gap: 3px; flex: none; }

.field {
  height: 24px;
  border: 2px solid #808080;
  border-right: 1px solid #e3e3e3;
  border-bottom: 1px solid #e3e3e3;
  background: #fff;
  padding: 0 5px;
  outline: none;
}
.w-m { width: 110px; }
.w-l { width: 138px; }
.w-s { width: 82px; }
.w-xs { width: 55px; }
.w-y { width: 68px; }
.w-find { width: 206px; }

.btn {
  width: 26px;
  height: 27px;
  flex: none;
  display: flex;
  align-items: center;
  justify-content: center;
  background: #f0f0f0;
  border: 1px solid #fdfdfd;
  border-right: 2px solid #808080;
  border-bottom: 2px solid #808080;
}
.btn.sq { width: 29px; height: 29px; }
.swatch { width: 19px; height: 19px; background: #00f; }

.toggles { display: flex; gap: 3px; margin: 0 8px 0 3px; }
.tog {
  height: 24px;
  min-width: 23px;
  padding: 0 7px;
  background: #f0f0f0;
  border: 1px solid #fdfdfd;
  border-right: 2px solid #808080;
  border-bottom: 2px solid #808080;
  line-height: 20px;
}
.tog.on {
  border: 2px solid #808080;
  border-right: 1px solid #e3e3e3;
  border-bottom: 1px solid #e3e3e3;
  background: #f8f8f8;
}
.snaps .pair { margin: 0 7px 0 6px; }
.measure { display: flex; justify-content: space-between; width: 270px; margin-left: 7px; flex: none; }
.measure svg { width: 22px; height: 22px; }

.work { display: flex; flex: 1; min-height: 0; margin-top: 8px; }
.side { width: 39px; flex: none; padding-left: 5px; border-right: 1px solid #fafafa; overflow: hidden; }
.hgrip {
  display: block;
  width: 24px;
  height: 4px;
  background: repeating-linear-gradient(90deg, #b4b4b4 0 1px, #f0f0f0 1px 2px);
}
.tools { display: grid; grid-auto-rows: 1fr; }
.tools-a { height: 522px; margin: 5px 0 7px; }
.tools-b { height: 220px; margin-top: 4px; }
.tools span { display: flex; align-items: center; position: relative; }
.tools svg { width: 20px; height: 20px; }
.tools span::after {
  content: "";
  position: absolute;
  left: 20px;
  bottom: 1px;
  border-left: 5px solid transparent;
  border-bottom: 5px solid #000;
}

.plan {
  flex: 1;
  min-width: 0;
  display: flex;
  flex-direction: column;
  border-top: 2px solid #707070;
  border-left: 2px solid #707070;
}
.planbar {
  display: flex;
  height: 36px;
  padding: 2px 0 0 2px;
  border-top: 1px solid #fff;
  border-left: 1px solid #fff;
  border-bottom: 1px solid #a0a0a0;
}
.planbar .btn { margin-right: 4px; }
.planbar .btn:nth-child(even) { margin-right: 3px; }

.desk { flex: 1; position: relative; background: #bababa; margin-left: 2px; }

.dialog {
  position: absolute;
  left: 6px;
  top: 7px;
  width: 808px;
  background: #f0f0f0;
  border: 1px solid #808080;
  box-shadow: 0 3px 16px 2px rgba(0, 0, 0, .4);
}
.title { display: flex; align-items: center; height: 38px; background: #fff; padding: 0 24px 0 12px; gap: 45px; }
.title h1 { flex: 1; margin: 0 0 0 -42px; font-size: 14px; font-weight: 400; color: #999; }
.wc { width: 13px; height: 13px; flex: none; }

.panels { display: flex; gap: 5px; padding: 6px 8px 0 6px; }
fieldset { margin: 0; min-width: 0; border: 1px solid #a8a8a8; padding: 0 6px 6px 8px; }
legend { padding: 0 3px; margin-left: -1px; line-height: 19px; }
.disk { width: 390px; }
.proj { flex: 1; }
.line { height: 34px; display: flex; align-items: center; justify-content: space-between; padding-left: 2px; }

.frame {
  display: flex;
  height: 500px;
  padding: 1px 3px 2px 1px;
  overflow: hidden;
  border: 2px solid #707070;
  border-right: 1px solid #808080;
  border-bottom: 1px solid #808080;
  background: #a0a0a0;
  box-shadow: inset -3px -2px 0 #f0f0f0;
}

table { border-collapse: separate; border-spacing: 0; table-layout: fixed; }
.grid-l { width: 276px; height: 105px; align-self: flex-start; }
.grid-r { width: 330px; height: 499px; flex: none; }
th, td { padding: 0; font-weight: 400; overflow: hidden; white-space: nowrap; background: #f0f0f0; }
thead th { height: 26px; padding: 0 0 2px 5px; text-align: left; border-right: 1px solid #707070; border-bottom: 1px solid #707070; border-left: 1px solid #fff; border-top: 1px solid #fff; }
tbody th { border-right: 1px solid #707070; border-bottom: 1px solid #707070; }
td { border-right: 1px solid #b8b8b8; border-bottom: 1px solid #b8b8b8; padding-left: 4px; vertical-align: top; line-height: 22px; }
.n { width: 23px; text-align: center; line-height: 20px; }
.grid-r .n { width: 30px; }
.c { width: 45px; }
.name { width: 126px; }
.grid-r .name { width: 208px; }
thead .down { border-left: 2px solid #707070; border-right: 1px solid #fff; border-top: 1px solid #707070; }
thead .view { padding-left: 4px; }
tbody .c, .v { background: #fff; padding-left: 9px; vertical-align: middle; line-height: 0; }
.v { padding-left: 11px; }
.tail { text-align: right; padding-right: 28px; }
.cur { border: 1px solid #000; }

input[type="checkbox"] {
  appearance: none;
  width: 23px;
  height: 22px;
  border: 2px solid #808080;
  border-right: 1px solid #e3e3e3;
  border-bottom: 1px solid #e3e3e3;
  background: #fff;
  vertical-align: middle;
}
input[type="checkbox"]:checked::before {
  content: "";
  display: block;
  width: 13px;
  height: 12px;
  margin: 4px 0 0 2px;
  background: #000;
  clip-path: polygon(0 40%, 20% 32%, 36% 58%, 85% 0, 100% 10%, 42% 100%, 28% 100%);
}
input.small { width: 15px; height: 15px; margin-right: 1px; }

.scroll { width: 22px; margin-left: auto; background: #f0f0f0; display: flex; flex-direction: column; align-items: center; padding: 5px 0 4px; }
.scroll svg { width: 12px; height: 12px; flex: none; }
.thumb { width: 18px; height: 190px; margin-top: auto; margin-bottom: 31px; background: #cdcdcd; }

.acts { display: flex; gap: 4px; height: 29px; margin-top: 3px; }
.acts .clean { background: #a0a0a0; border: 4px solid #5359a5; width: 32px; height: 32px; margin: -1px -2px -2px; }
.acts .red { flex: 1; min-width: 0; background: #ff4a4a; margin: 1px 1px 0 15px; }
.acts .pic { height: 26px; }

.status {
  height: 24px;
  margin: 6px 8px 0;
  padding-left: 6px;
  border: 2px solid #808080;
  border-right: 1px solid #fff;
  border-bottom: 1px solid #fff;
}
.foot { display: grid; grid-template-columns: repeat(3, 214px); justify-content: center; justify-items: center; padding: 3px 0 7px; }
.btn.wide { width: 57px; height: 27px; }
.resize { position: absolute; right: 0; bottom: 0; width: 15px; height: 15px; }

/* Windows and notes that float over the workspace */
.over { position: absolute; margin: -1px 0 0 -1px; }
.rows-mark { left: 494px; top: 319px; width: 254px; height: 58px; border: 4px solid #5359a5; }

.modal {
  left: 276px;
  top: 401px;
  width: 413px;
  background: #fff;
  border: 1px solid #7b7474;
  box-shadow: 0 3px 18px 2px rgba(0, 0, 0, .45);
}
.mtitle { display: flex; justify-content: space-between; align-items: center; height: 38px; padding: 0 15px 0 10px; background: #7b7474; }
.mtitle h2 { margin: 0; font-size: 14px; font-weight: 400; color: #fff; }
.mbody { display: flex; height: 140px; padding: 28px 0 0 26px; }
.q { width: 38px; height: 38px; flex: none; }
.msg { white-space: nowrap; }
.msg p { margin: 0; padding-left: 12px; line-height: 20px; }
.msg .warn { width: 288px; margin: 3px 0 6px; padding-left: 9px; border: 4px solid #5359a5; font-size: 13px; line-height: 28px; }
.mfoot { display: flex; justify-content: flex-end; align-items: center; gap: 9px; height: 51px; padding: 0 19px 3px 0; background: #f0f0f0; }
.mfoot button { background: #f0f0f0; font-size: 13px; }
.yes { width: 96px; height: 32px; border: 4px solid #5359a5; }
.no { width: 94px; height: 29px; border: 1px solid #606060; box-shadow: inset -2px -2px 0 #808080, inset 1px 1px 0 #fff; }

.note {
  background: #fff;
  border: 2px solid #5359a5;
  color: #000;
  text-align: center;
  white-space: nowrap;
  font: 16px/19px "Liberation Sans", Arial, sans-serif;
  padding: 3px 0 5px;
}
.n1 { left: 229px; top: 322px; width: 218px; }
.n2 { left: 668px; top: 480px; width: 301px; }
.n3 { left: 536px; top: 635px; width: 246px; }
.n4 { left: 237px; top: 659px; width: 239px; }
.tails { left: 0; top: 0; width: 975px; height: 849px; pointer-events: none; }

.step {
  left: 902px;
  top: 760px;
  width: 61px;
  height: 76px;
  border: 2px solid #5359a5;
  color: #000;
  text-align: center;
  font: 58px/72px Roboto, Arial, sans-serif;
}
```
